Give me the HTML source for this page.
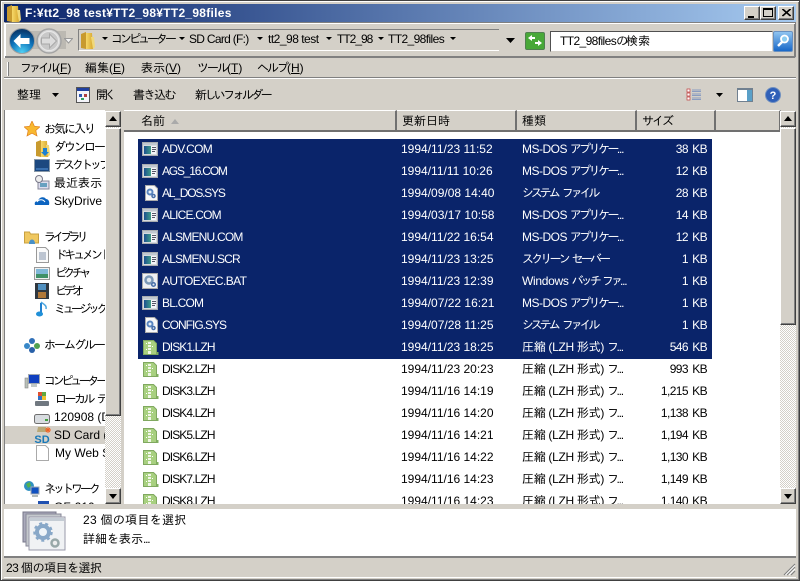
<!DOCTYPE html>
<html><head><meta charset="utf-8">
<style>
*{box-sizing:border-box}
html,body{margin:0;padding:0;width:800px;height:581px;overflow:hidden;background:#d4d0c8}
body{position:relative;font-family:"Liberation Sans","IPAGothic","Noto Sans CJK JP",sans-serif;font-size:12px;color:#000}
.a,.t,svg{position:absolute}
.t{white-space:nowrap;line-height:14px;height:14px}
.s{color:#fff}
.r{text-align:right;letter-spacing:-.6px;word-spacing:1.500px}
.k{letter-spacing:-2.6px}
.k3{letter-spacing:-3px}
.k2{letter-spacing:-2px}
.d{letter-spacing:-1.2px}
.m{letter-spacing:-.5px}
.sy{letter-spacing:-3.100px;word-spacing:4px}
.sc{letter-spacing:-2.800px;word-spacing:3px}
.z{letter-spacing:-.3px}
.btn{position:absolute;background:#d4d0c8;border:1px solid;border-color:#fff #404040 #404040 #fff;box-shadow:inset -1px -1px 0 #808080}
.hd{position:absolute;top:110px;height:22px;background:#d4d0c8;border-right:2px solid #707070;border-bottom:2px solid #707070;border-top:1px solid #fff}
</style></head><body>
<svg width="0" height="0" style="position:absolute"><defs>
<linearGradient id="sc" x1="0" x2="1"><stop offset="0" stop-color="#1c4f90"/><stop offset="1" stop-color="#40a088"/></linearGradient>
<g id="app"><rect x="0.5" y="0.5" width="15" height="13" fill="#d6dade" stroke="#a8acb0"/><rect x="1" y="1" width="14" height="2" fill="#c0c8d0"/><rect x="2" y="4" width="12" height="8" fill="#f4f6f8"/><rect x="2" y="4" width="7" height="8" fill="url(#sc)"/><rect x="10" y="5" width="4" height="1" fill="#556"/><rect x="10" y="7" width="4" height="1" fill="#556"/><rect x="10" y="9" width="3" height="1" fill="#556"/></g>
<g id="sys"><path d="M1.500.5h9l3 3v12h-12z" fill="#f8f8f8" stroke="#aaa"/><circle cx="6" cy="7" r="2.500" fill="#e8f0f8" stroke="#5a86c0" stroke-width="2"/><circle cx="9.500" cy="11" r="1.500" fill="#e8f0f8" stroke="#4a70a8" stroke-width="1.500"/></g>
<g id="bat"><rect x=".5" y=".5" width="15" height="15" fill="#eef0f4" stroke="#aaa"/><circle cx="7" cy="7" r="3.500" fill="#dfe8f0" stroke="#7a98b8" stroke-width="2.500"/><circle cx="11.500" cy="11.500" r="1.800" fill="#dfe8f0" stroke="#4a70a8" stroke-width="1.500"/></g>
<g id="lzh"><path d="M.5.5h10l3 3v11h-13z" fill="#a8d080" stroke="#80a860"/><rect x="14" y="12" width="1.500" height="3" fill="#80b060"/><path d="M5 2h3v2h-3zM5 5h3v2h-3zM5 8h3v2h-3zM5 11h3v3h-3z" fill="#f0f6e8"/><path d="M3 3.500h1M9 6.500h1M3 9.500h1" stroke="#fff"/></g>
<linearGradient id="fo" x1="0" x2="1"><stop offset="0" stop-color="#f6d868"/><stop offset="1" stop-color="#d8a830"/></linearGradient>
<g id="folder"><path d="M1 3l5-2v17l-5-1z" fill="#c89a2e"/><path d="M6 2h6l1 16h-7z" fill="url(#fo)"/><path d="M11 6h3l1 10-2 2z" fill="#f0d878"/></g>
</defs></svg>

<div class="a" style="left:0;top:0;width:800px;height:581px;border:1px solid #404040;box-shadow:inset 1px 1px 0 #fff,inset -1px -1px 0 #808080"></div>

<!-- Title bar -->
<div class="a" style="left:4px;top:4px;width:792px;height:18px;background:linear-gradient(90deg,#0a246a,#a6caf0)"></div>
<svg style="left:6px;top:4px" width="16" height="18" viewBox="0 0 16 18"><use href="#folder"/></svg>
<div class="t" style="left:25px;top:6px;color:#fff;font-weight:bold;font-size:12px;letter-spacing:.28px">F:¥tt2_98 test¥TT2_98¥TT2_98files</div>
<div class="btn" style="left:744px;top:6px;width:16px;height:14px"><div class="a" style="left:3px;top:9px;width:6px;height:2px;background:#000"></div></div>
<div class="btn" style="left:760px;top:6px;width:16px;height:14px"><div class="a" style="left:2px;top:1px;width:10px;height:9px;border:1px solid #000;border-top-width:2px"></div></div>
<div class="btn" style="left:778px;top:6px;width:16px;height:14px"><svg style="left:3px;top:2px" width="9" height="8"><path d="M0 0L8 7M1 0L9 7M8 0L0 7M9 0L1 7" stroke="#000"/></svg></div>

<!-- Address toolbar -->
<div class="a" style="left:4px;top:22px;width:792px;height:36px;border:2px solid;border-color:#808080 #808080 #fff #fff"></div>
<div class="a" style="left:5px;top:23px;width:790px;height:1px;background:#fff"></div>
<div class="a" style="left:5px;top:56px;width:790px;height:2px;background:#808080"></div>
<div class="a" style="left:22px;top:31px;width:44px;height:18px;background:#bcb9b2"></div>
<svg style="left:9px;top:28px" width="58" height="27" viewBox="0 0 58 27">
<defs><radialGradient id="bb" cx=".5" cy=".95" r=".85"><stop offset="0" stop-color="#50d0f4"/><stop offset=".6" stop-color="#0c70b8"/><stop offset="1" stop-color="#0a3c70"/></radialGradient></defs>
<circle cx="13" cy="13" r="12.500" fill="url(#bb)" stroke="#a0a0a0"/>
<path d="M4.500 13l7-7v4h9v6h-9v4z" fill="#fff"/>
<circle cx="40" cy="13" r="12" fill="#d8d8d8" stroke="#a4a4a4" stroke-width="1.500"/>
<circle cx="40" cy="13" r="9.500" fill="#c8c8c8" stroke="#e8e8e8"/>
<path d="M47.500 13l-7-7v4h-8v6h8v4z" fill="#dcdcdc" stroke="#a8a8a8"/></svg>
<svg style="left:64px;top:38px" width="9" height="6"><path d="M.5.5h8L4.500 5z" fill="#f4f4f4" stroke="#999"/></svg>
<div class="a" style="left:78px;top:29px;width:421px;height:22px;border-left:1px solid #808080;border-top:1px solid #808080;border-bottom:1px solid #fff"></div>
<svg style="left:80px;top:31px" width="16" height="18" viewBox="0 0 16 18"><use href="#folder"/></svg>

<div class="t k3" style="left:111px;top:32px">コンピューター</div>
<div class="t" style="left:189px;top:32px;letter-spacing:-.7px">SD Card (F:)</div>
<div class="t" style="left:268px;top:32px;letter-spacing:-.5px">tt2_98 test</div>
<div class="t" style="left:337px;top:32px;letter-spacing:-1px">TT2_98</div>
<div class="t" style="left:388px;top:32px;letter-spacing:-.6px">TT2_98files</div>
<svg style="left:0;top:0" width="800" height="60">
<path d="M102 37h6l-3 3zM179 37h6l-3 3zM257 37h6l-3 3zM326 37h6l-3 3zM378 37h6l-3 3zM450 37h6l-3 3zM506 38h9l-4.500 5z" fill="#000"/></svg>

<div class="a" style="left:525px;top:32px;width:20px;height:18px;background:#48a838;border:1px solid #508050;border-radius:2px"></div>
<svg style="left:527px;top:34px" width="16" height="14" viewBox="0 0 16 14"><path d="M1 4l4-3v2h3v2H5v2zM15 9l-4 3v-2H8V8h3V6z" fill="#fff"/></svg>
<div class="a" style="left:550px;top:31px;width:223px;height:21px;background:#fff;border:1px solid;border-color:#505050 #d4d0c8 #d4d0c8 #505050"></div>
<div class="t" style="left:560px;top:34px"><span style="letter-spacing:-.6px">TT2_98files</span><span style="letter-spacing:-2px">の</span>検索</div>
<div class="a" style="left:773px;top:31px;width:20px;height:21px;background:linear-gradient(#8fc4f0,#1868c8);border:1px solid #6890c0;border-radius:2px"></div>
<svg style="left:775px;top:33px" width="16" height="16" viewBox="0 0 16 16"><circle cx="9.500" cy="6" r="3.500" fill="#8ecdf0" stroke="#fff" stroke-width="1.800"/><path d="M7 9l-4 4" stroke="#fff" stroke-width="2.500"/></svg>

<!-- Menu bar -->
<div class="a" style="left:7px;top:62px;width:2px;height:14px;background:#fff;border-right:1px solid #808080"></div>
<div class="t" style="left:20px;top:61px"><span class="k3">ファイル</span>(<u>F</u>)</div>
<div class="t" style="left:85px;top:61px">編集(<u>E</u>)</div>
<div class="t" style="left:141px;top:61px">表示(<u>V</u>)</div>
<div class="t" style="left:197px;top:61px"><span class="k2">ツール</span>(<u>T</u>)</div>
<div class="t" style="left:257px;top:61px"><span class="k2">ヘルプ</span>(<u>H</u>)</div>
<div class="a" style="left:4px;top:77px;width:792px;height:2px;background:#808080;border-bottom:1px solid #fff"></div>

<!-- Command bar -->
<div class="t" style="left:17px;top:88px">整理</div>
<svg style="left:51px;top:92px" width="9" height="6"><path d="M1 1h7l-3.500 4z" fill="#000"/></svg>
<svg style="left:76px;top:87px" width="14" height="16" viewBox="0 0 14 16"><rect x=".5" y=".5" width="13" height="15" fill="#f4f4fa" stroke="#555"/><rect x="1" y="1" width="12" height="3" fill="#2040a0"/><rect x="3" y="7" width="3" height="3" fill="#3058b0"/><rect x="8" y="7" width="3" height="3" fill="#b04040"/><rect x="5" y="11" width="3" height="2" fill="#30a060"/></svg>
<div class="t" style="left:96px;top:88px;letter-spacing:-3.500px">開く</div>
<div class="t" style="left:133px;top:88px;letter-spacing:-1.500px">書き込む</div>
<div class="t" style="left:195px;top:88px;letter-spacing:-2.600px">新しいフォルダー</div>
<svg style="left:686px;top:88px" width="16" height="13"><path d="M1 1h3v3H1zM1 5h3v3H1zM1 9h3v3H1z" fill="#fff" stroke="#c04040" stroke-width=".7"/><path d="M6 2h9M6 3.500h9M6 6h9M6 7.500h9M6 10h9M6 11.500h9" stroke="#8a9cc0"/></svg>
<svg style="left:715px;top:92px" width="9" height="6"><path d="M1 1h7l-3.500 4z" fill="#000"/></svg>
<div class="a" style="left:737px;top:88px;width:16px;height:14px;background:#fff;border:1px solid #708090;border-top-width:2px"><div class="a" style="right:0;top:0;width:5px;height:11px;background:#5aa0c8"></div></div>
<svg style="left:765px;top:87px" width="16" height="16" viewBox="0 0 16 16"><circle cx="8" cy="8" r="7.500" fill="#3060b8" stroke="#7090c0"/><text x="8" y="12" font-size="11" font-weight="bold" fill="#fff" text-anchor="middle" font-family="Liberation Sans">?</text></svg>

<!-- Nav pane -->
<div class="a" style="left:4px;top:110px;width:101px;height:394px;background:#fff;border-left:1px solid #808080"></div>
<div class="a" style="left:5px;top:426px;width:100px;height:18px;background:#d4d0c8"></div>
<svg style="left:24px;top:121px" width="16" height="16" viewBox="0 0 16 16"><path d="M8 0l2.400 5.200 5.600.6-4.200 3.700 1.200 5.500L8 12.200 3 15l1.200-5.500L0 5.800l5.600-.6z" fill="#f8b830" stroke="#e08020" stroke-width=".7"/></svg>
<div class="t k2" style="left:44px;top:122px">お気に入り</div>
<svg style="left:35px;top:139px" width="16" height="18" viewBox="0 0 16 18"><use href="#folder"/><path d="M8 9h4v4h2l-4 4-4-4h2z" fill="#1c80d0"/></svg>
<div class="t k2" style="left:54px;top:140px;width:51px;overflow:hidden">ダウンロード</div>
<svg style="left:34px;top:159px" width="16" height="14"><rect x=".5" y=".5" width="15" height="12" fill="#1c4880" stroke="#8898a8"/><rect x="2" y="9" width="12" height="2" fill="#3a70b0"/></svg>
<div class="t k3" style="left:54px;top:158px;width:51px;overflow:hidden">デスクトップ</div>
<svg style="left:34px;top:175px" width="16" height="16"><rect x="4" y="6" width="11" height="8" fill="#dde" stroke="#889"/><circle cx="5" cy="4" r="3.500" fill="#eee" stroke="#778"/><rect x="6" y="8" width="7" height="4" fill="#68a0c0"/></svg>
<div class="t" style="left:54px;top:176px;width:51px;overflow:hidden">最近表示した</div>
<svg style="left:34px;top:194px" width="16" height="12"><path d="M1 11c-1-3 1-4 3-4 1-4 6-5 8-2 2 0 4 2 3 6z" fill="#0c64c0"/><path d="M3 8c2-3 6-3 8 0" stroke="#fff" fill="none"/></svg>
<div class="t" style="left:54px;top:194px">SkyDrive</div>

<svg style="left:24px;top:230px" width="16" height="15"><path d="M.5 13V2h5l1 2h8v9z" fill="#f0c860" stroke="#c8a040"/><path d="M5 14c0-6 6-6 6 0z" fill="#4890c8"/></svg>
<div class="t" style="left:44px;top:230px;letter-spacing:-3.800px">ライブラリ</div>
<svg style="left:36px;top:247px" width="13" height="16"><path d="M.5.500h9l3 3v12h-12z" fill="#fafafa" stroke="#999"/><path d="M3 6h7M3 8h7M3 10h7M3 12h7" stroke="#8090a8"/></svg>
<div class="t k3" style="left:55px;top:248px;width:50px;overflow:hidden">ドキュメント</div>
<svg style="left:34px;top:267px" width="16" height="13"><rect x=".5" y=".5" width="15" height="12" fill="#f0f0f0" stroke="#999"/><rect x="2" y="2" width="12" height="5" fill="#80b8d8"/><rect x="2" y="7" width="12" height="4" fill="#409068"/></svg>
<div class="t" style="left:55px;top:266px;letter-spacing:-3.800px">ピクチャ</div>
<svg style="left:35px;top:283px" width="14" height="16"><rect width="14" height="16" fill="#303840"/><rect x="3" y="1" width="8" height="6" fill="#5090c0"/><rect x="3" y="9" width="8" height="6" fill="#b07838"/></svg>
<div class="t" style="left:55px;top:284px;letter-spacing:-3.300px">ビデオ</div>
<svg style="left:36px;top:301px" width="12" height="16"><path d="M5 2v10" stroke="#2080d0" stroke-width="2"/><ellipse cx="3.500" cy="13" rx="3.500" ry="2.500" fill="#2090d8"/><path d="M5 1c2 2 6 3 5 7" stroke="#50a8e0" stroke-width="1.500" fill="none"/></svg>
<div class="t" style="left:54px;top:302px;width:51px;overflow:hidden;letter-spacing:-3.500px">ミュージック</div>

<svg style="left:24px;top:337px" width="16" height="16"><circle cx="8" cy="4" r="3" fill="#3070b8"/><circle cx="3" cy="9" r="3" fill="#3888c8"/><circle cx="13" cy="9" r="3" fill="#50a050"/><circle cx="8" cy="13" r="3" fill="#2860a8"/></svg>
<div class="t k2" style="left:44px;top:338px;width:61px;overflow:hidden">ホームグループ</div>

<svg style="left:24px;top:374px" width="16" height="15"><rect x="1" y="4" width="3" height="10" fill="#b8c0b8" stroke="#888" stroke-width=".6"/><rect x="4.500" y=".5" width="11" height="9" fill="#1040c0" stroke="#a0a8b0"/><rect x="7" y="10" width="6" height="3" fill="#c0c8c8"/></svg>
<div class="t" style="left:44px;top:374px;width:61px;overflow:hidden;letter-spacing:-3.300px">コンピューター</div>
<svg style="left:34px;top:391px" width="16" height="16"><rect x="1" y="10" width="14" height="5" rx="1" fill="#707880"/><rect x="4" y="1" width="4" height="4" fill="#e05030"/><rect x="8" y="1" width="4" height="4" fill="#60a840"/><rect x="4" y="5" width="4" height="4" fill="#3070c8"/><rect x="8" y="5" width="4" height="4" fill="#f0c030"/></svg>
<div class="t" style="left:55px;top:392px;width:50px;overflow:hidden;letter-spacing:-2.500px;word-spacing:3px">ローカル ディスク</div>
<svg style="left:34px;top:414px" width="16" height="11"><rect x=".5" y=".5" width="15" height="9" rx="2" fill="#d8dce0" stroke="#707070"/><rect x="11" y="5" width="3" height="2" fill="#40a040"/></svg>
<div class="t" style="left:54px;top:410px;width:51px;overflow:hidden">120908 (D:)</div>
<svg style="left:33px;top:426px" width="18" height="18"><path d="M5 1h8l1 5H4z" fill="#b8a878"/><text x="9" y="17" font-size="11" font-weight="bold" fill="#1878b8" text-anchor="middle" font-family="Liberation Sans">SD</text><path d="M15 1v6M12 4h6M13 2l4 4M17 2l-4 4" stroke="#f06020"/></svg>
<div class="t" style="left:54px;top:428px;width:51px;overflow:hidden">SD Card (F:)</div>
<svg style="left:36px;top:445px" width="13" height="16"><path d="M.5.500h9l3 3v12h-12z" fill="#fff" stroke="#aaa"/></svg>
<div class="t" style="left:55px;top:446px;width:50px;overflow:hidden">My Web Sites</div>
<svg style="left:24px;top:481px" width="16" height="16"><circle cx="5" cy="5" r="5" fill="#3090c0"/><path d="M2 3l4-2 1 4-3 2z" fill="#50b050"/><rect x="7" y="6" width="8" height="7" fill="#1050c0" stroke="#a0a8b0"/><rect x="8" y="14" width="6" height="2" fill="#b0b8b8"/></svg>
<div class="t k3" style="left:44px;top:482px">ネットワーク</div>
<div class="a" style="left:38px;top:501px;width:11px;height:3px;background:#2050b0"></div>
<div class="t" style="left:54px;top:500px;width:51px;height:4px;overflow:hidden;line-height:14px">GF-210</div>

<!-- Nav scrollbar -->
<div class="a" style="left:105px;top:111px;width:16px;height:393px;background:repeating-conic-gradient(#d4d0c8 0 25%,#fff 0 50%) 0 0/2px 2px"></div>
<div class="btn" style="left:105px;top:111px;width:16px;height:16px"><svg style="left:3px;top:4px" width="9" height="5"><path d="M4 0l4 5H0z" fill="#000"/></svg></div>
<div class="btn" style="left:105px;top:128px;width:16px;height:288px"></div>
<div class="btn" style="left:105px;top:488px;width:16px;height:16px"><svg style="left:3px;top:5px" width="9" height="5"><path d="M0 0h8L4 5z" fill="#000"/></svg></div>

<!-- List -->
<div class="a" style="left:124px;top:110px;width:657px;height:394px;background:#fff"></div>
<div class="hd" style="left:124px;width:273px"></div>
<div class="hd" style="left:397px;width:120px"></div>
<div class="hd" style="left:517px;width:120px"></div>
<div class="hd" style="left:637px;width:79px"></div>
<div class="hd" style="left:716px;width:65px"></div>
<div class="t" style="left:141px;top:114px">名前</div>
<svg style="left:171px;top:119px" width="8" height="5"><path d="M4 0l4 5H0z" fill="#aaa"/></svg>
<div class="t" style="left:402px;top:114px">更新日時</div>
<div class="t" style="left:522px;top:114px">種類</div>
<div class="t" style="left:642px;top:114px;letter-spacing:-2px">サイズ</div>

<div class="a" style="left:138px;top:139px;width:574px;height:220px;background:#0a246a"></div>

<svg style="left:142px;top:142px" width="16" height="14"><use href="#app"/></svg><div class="t s" style="left:162px;top:142px;letter-spacing:-.7px">ADV.COM</div><div class="t s" style="left:401px;top:142px">1994/11/23 11:52</div><div class="t s" style="left:522px;top:142px"><span class="m">MS-DOS </span><span class="k">アプリケー</span><span class="d">...</span></div><div class="t s r" style="left:640px;top:142px;width:67px">38 KB</div>
<svg style="left:142px;top:164px" width="16" height="14"><use href="#app"/></svg><div class="t s" style="left:162px;top:164px;letter-spacing:-1.200px">AGS_16.COM</div><div class="t s" style="left:401px;top:164px">1994/11/11 10:26</div><div class="t s" style="left:522px;top:164px"><span class="m">MS-DOS </span><span class="k">アプリケー</span><span class="d">...</span></div><div class="t s r" style="left:640px;top:164px;width:67px">12 KB</div>
<svg style="left:144px;top:185px" width="14" height="16"><use href="#sys"/></svg><div class="t s" style="left:162px;top:186px;letter-spacing:-1.200px">AL_DOS.SYS</div><div class="t s" style="left:401px;top:186px">1994/09/08 14:40</div><div class="t s sy" style="left:522px;top:186px">システム ファイル</div><div class="t s r" style="left:640px;top:186px;width:67px">28 KB</div>
<svg style="left:142px;top:208px" width="16" height="14"><use href="#app"/></svg><div class="t s" style="left:162px;top:208px;letter-spacing:-.8px">ALICE.COM</div><div class="t s" style="left:401px;top:208px">1994/03/17 10:58</div><div class="t s" style="left:522px;top:208px"><span class="m">MS-DOS </span><span class="k">アプリケー</span><span class="d">...</span></div><div class="t s r" style="left:640px;top:208px;width:67px">14 KB</div>
<svg style="left:142px;top:230px" width="16" height="14"><use href="#app"/></svg><div class="t s" style="left:162px;top:230px;letter-spacing:-.8px">ALSMENU.COM</div><div class="t s" style="left:401px;top:230px">1994/11/22 16:54</div><div class="t s" style="left:522px;top:230px"><span class="m">MS-DOS </span><span class="k">アプリケー</span><span class="d">...</span></div><div class="t s r" style="left:640px;top:230px;width:67px">12 KB</div>
<svg style="left:142px;top:252px" width="16" height="14"><use href="#app"/></svg><div class="t s" style="left:162px;top:252px;letter-spacing:-.8px">ALSMENU.SCR</div><div class="t s" style="left:401px;top:252px">1994/11/23 13:25</div><div class="t s sc" style="left:522px;top:252px">スクリーン セーバー</div><div class="t s r" style="left:640px;top:252px;width:67px">1 KB</div>
<svg style="left:142px;top:273px" width="16" height="16"><use href="#bat"/></svg><div class="t s" style="left:162px;top:274px;letter-spacing:-.6px">AUTOEXEC.BAT</div><div class="t s" style="left:401px;top:274px">1994/11/23 12:39</div><div class="t s" style="left:522px;top:274px"><span style="letter-spacing:-.3px">Windows </span><span class="k3" style="word-spacing:3px">バッチ ファ</span><span class="d">...</span></div><div class="t s r" style="left:640px;top:274px;width:67px">1 KB</div>
<svg style="left:142px;top:296px" width="16" height="14"><use href="#app"/></svg><div class="t s" style="left:162px;top:296px;letter-spacing:-.8px">BL.COM</div><div class="t s" style="left:401px;top:296px">1994/07/22 16:21</div><div class="t s" style="left:522px;top:296px"><span class="m">MS-DOS </span><span class="k">アプリケー</span><span class="d">...</span></div><div class="t s r" style="left:640px;top:296px;width:67px">1 KB</div>
<svg style="left:144px;top:317px" width="14" height="16"><use href="#sys"/></svg><div class="t s" style="left:162px;top:318px;letter-spacing:-1px">CONFIG.SYS</div><div class="t s" style="left:401px;top:318px">1994/07/28 11:25</div><div class="t s sy" style="left:522px;top:318px">システム ファイル</div><div class="t s r" style="left:640px;top:318px;width:67px">1 KB</div>
<svg style="left:143px;top:340px" width="16" height="16"><use href="#lzh"/></svg><div class="t s" style="left:162px;top:340px;letter-spacing:-.9px">DISK1.LZH</div><div class="t s" style="left:401px;top:340px">1994/11/23 18:25</div><div class="t s" style="left:522px;top:340px"><span class="z">圧縮 (LZH 形式) </span><span class="k">フ</span><span class="d">...</span></div><div class="t s r" style="left:640px;top:340px;width:67px">546 KB</div>
<svg style="left:143px;top:362px" width="16" height="16"><use href="#lzh"/></svg><div class="t" style="left:162px;top:362px;letter-spacing:-.9px">DISK2.LZH</div><div class="t" style="left:401px;top:362px">1994/11/23 20:23</div><div class="t" style="left:522px;top:362px"><span class="z">圧縮 (LZH 形式) </span><span class="k">フ</span><span class="d">...</span></div><div class="t r" style="left:640px;top:362px;width:67px">993 KB</div>
<svg style="left:143px;top:384px" width="16" height="16"><use href="#lzh"/></svg><div class="t" style="left:162px;top:384px;letter-spacing:-.9px">DISK3.LZH</div><div class="t" style="left:401px;top:384px">1994/11/16 14:19</div><div class="t" style="left:522px;top:384px"><span class="z">圧縮 (LZH 形式) </span><span class="k">フ</span><span class="d">...</span></div><div class="t r" style="left:640px;top:384px;width:67px">1,215 KB</div>
<svg style="left:143px;top:406px" width="16" height="16"><use href="#lzh"/></svg><div class="t" style="left:162px;top:406px;letter-spacing:-.9px">DISK4.LZH</div><div class="t" style="left:401px;top:406px">1994/11/16 14:20</div><div class="t" style="left:522px;top:406px"><span class="z">圧縮 (LZH 形式) </span><span class="k">フ</span><span class="d">...</span></div><div class="t r" style="left:640px;top:406px;width:67px">1,138 KB</div>
<svg style="left:143px;top:428px" width="16" height="16"><use href="#lzh"/></svg><div class="t" style="left:162px;top:428px;letter-spacing:-.9px">DISK5.LZH</div><div class="t" style="left:401px;top:428px">1994/11/16 14:21</div><div class="t" style="left:522px;top:428px"><span class="z">圧縮 (LZH 形式) </span><span class="k">フ</span><span class="d">...</span></div><div class="t r" style="left:640px;top:428px;width:67px">1,194 KB</div>
<svg style="left:143px;top:450px" width="16" height="16"><use href="#lzh"/></svg><div class="t" style="left:162px;top:450px;letter-spacing:-.9px">DISK6.LZH</div><div class="t" style="left:401px;top:450px">1994/11/16 14:22</div><div class="t" style="left:522px;top:450px"><span class="z">圧縮 (LZH 形式) </span><span class="k">フ</span><span class="d">...</span></div><div class="t r" style="left:640px;top:450px;width:67px">1,130 KB</div>
<svg style="left:143px;top:472px" width="16" height="16"><use href="#lzh"/></svg><div class="t" style="left:162px;top:472px;letter-spacing:-.9px">DISK7.LZH</div><div class="t" style="left:401px;top:472px">1994/11/16 14:23</div><div class="t" style="left:522px;top:472px"><span class="z">圧縮 (LZH 形式) </span><span class="k">フ</span><span class="d">...</span></div><div class="t r" style="left:640px;top:472px;width:67px">1,149 KB</div>
<svg style="left:143px;top:494px" width="16" height="10" viewBox="0 0 16 10"><use href="#lzh"/></svg><div class="a" style="left:162px;top:494px;width:600px;height:10px;overflow:hidden"><div class="t" style="left:0;top:0;letter-spacing:-.9px">DISK8.LZH</div><div class="t" style="left:239px;top:0">1994/11/16 14:23</div><div class="t" style="left:360px;top:0"><span class="z">圧縮 (LZH 形式) </span><span class="k">フ</span><span class="d">...</span></div><div class="t r" style="left:478px;top:0;width:67px">1,140 KB</div></div>

<!-- List scrollbar -->
<div class="a" style="left:780px;top:111px;width:16px;height:393px;background:repeating-conic-gradient(#d4d0c8 0 25%,#fff 0 50%) 0 0/2px 2px"></div>
<div class="btn" style="left:780px;top:111px;width:16px;height:16px"><svg style="left:3px;top:4px" width="9" height="5"><path d="M4 0l4 5H0z" fill="#000"/></svg></div>
<div class="btn" style="left:780px;top:128px;width:16px;height:197px"></div>
<div class="btn" style="left:780px;top:488px;width:16px;height:16px"><svg style="left:3px;top:5px" width="9" height="5"><path d="M0 0h8L4 5z" fill="#000"/></svg></div>

<!-- Details -->
<div class="a" style="left:4px;top:509px;width:792px;height:47px;background:#fff"></div>
<svg style="left:22px;top:511px" width="44" height="40" viewBox="0 0 44 40"><rect x="1" y="1" width="33" height="30" fill="#aab" stroke="#778"/><rect x="4" y="3" width="35" height="32" fill="#c4c8cc" stroke="#889"/><rect x="7" y="6" width="36" height="33" fill="#f0f2f4" stroke="#99a"/><rect x="8" y="7" width="34" height="3" fill="#c4ccd4"/><circle cx="21" cy="21" r="6" fill="#eef4f8" stroke="#88a8c8" stroke-width="4"/><circle cx="21" cy="21" r="8.500" fill="none" stroke="#88a8c8" stroke-width="2.500" stroke-dasharray="3 3"/><circle cx="33" cy="32" r="3.500" fill="#eee" stroke="#98a8a8" stroke-width="2.500"/></svg>
<div class="t" style="left:83px;top:513px;letter-spacing:.3px">23 個の項目を選択</div>
<div class="t" style="left:83px;top:532px"><span>詳細を表示</span><span class="d">...</span></div>

<!-- Status bar -->
<div class="a" style="left:4px;top:556px;width:792px;height:22px;background:#d4d0c8;border-top:2px solid #808080;border-bottom:1px solid #fff"></div>
<div class="t" style="left:6px;top:561px;letter-spacing:-.5px">23 個の項目を選択</div>
<svg style="left:782px;top:562px" width="14" height="14"><path d="M13 2L2 13M13 5L5 13M13 9L9 13" stroke="#808080" stroke-width="1.200"/><path d="M13 3.500L3.500 13M13 7L7 13" stroke="#fff"/></svg>
</body></html>
